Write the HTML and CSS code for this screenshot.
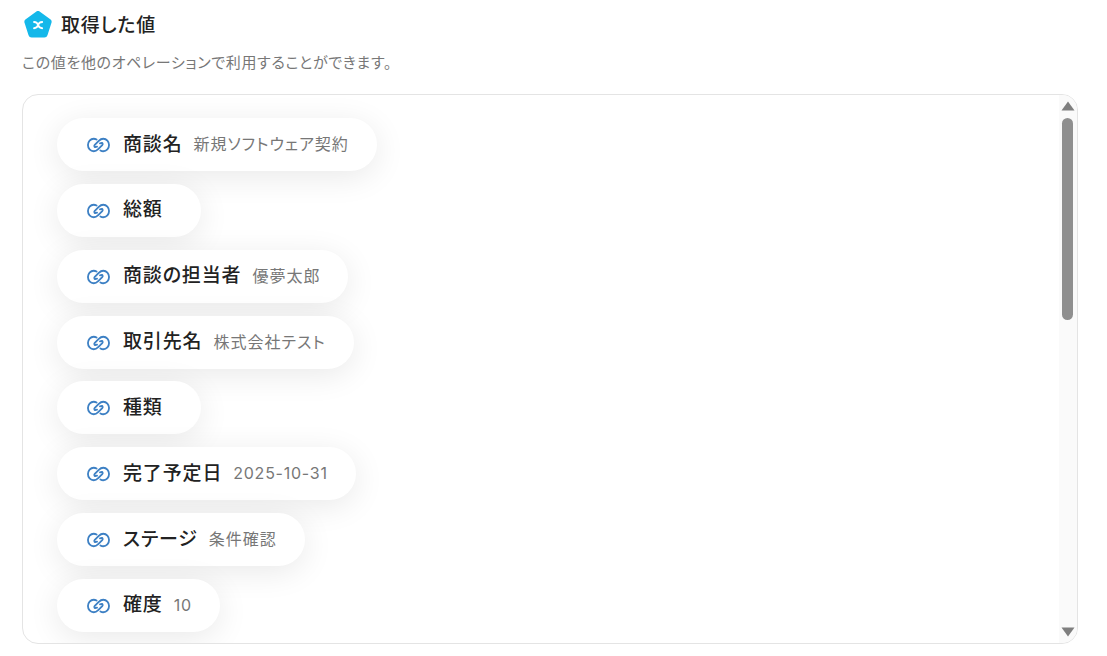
FILE: index.html
```html
<!DOCTYPE html>
<html lang="ja">
<head>
<meta charset="utf-8">
<title>取得した値</title>
<link rel="stylesheet" href="styles.css">
</head>
<body>
<main class="page">
  <header class="head">
    <svg class="logo" viewBox="1 1 26 26" width="28" height="28" aria-hidden="true">
      <path d="M12.2 1.600a3 3 0 0 1 3.600 0l9.600 7a3 3 0 0 1 1.100 3.400l-3.700 11.500a3 3 0 0 1-2.900 2.100H8.100a3 3 0 0 1-2.900-2.100L1.500 12a3 3 0 0 1 1.100-3.400z" fill="#14b8ea"/>
      <path d="M10.300 11.200c2.800 0 3.400 1.500 3.800 2.900s1 2.900 3.800 2.900M10.300 17c2.800 0 3.400-1.500 3.800-2.900s1-2.900 3.800-2.900" stroke="#fff" stroke-width="1.700" stroke-linecap="round" fill="none"/>
    </svg>
    <h1 class="title">取得した値</h1>
  </header>
  <p class="desc">この値を他のオペレーションで利用することができます。</p>
  <section class="card">
    <ul class="list">
      <li class="pill"><svg class="link"><use href="#chain"/></svg><span class="label">商談名</span><span class="value">新規ソフトウェア契約</span></li>
      <li class="pill"><svg class="link"><use href="#chain"/></svg><span class="label">総額</span><span class="value"></span></li>
      <li class="pill"><svg class="link"><use href="#chain"/></svg><span class="label">商談の担当者</span><span class="value">優夢太郎</span></li>
      <li class="pill"><svg class="link"><use href="#chain"/></svg><span class="label">取引先名</span><span class="value">株式会社テスト</span></li>
      <li class="pill"><svg class="link"><use href="#chain"/></svg><span class="label">種類</span><span class="value"></span></li>
      <li class="pill"><svg class="link"><use href="#chain"/></svg><span class="label">完了予定日</span><span class="value value-num">2025-10-31</span></li>
      <li class="pill"><svg class="link"><use href="#chain"/></svg><span class="label">ステージ</span><span class="value">条件確認</span></li>
      <li class="pill"><svg class="link"><use href="#chain"/></svg><span class="label">確度</span><span class="value value-num">10</span></li>
    </ul>
    <div class="scrollbar" aria-hidden="true">
      <svg class="arrow" viewBox="0 0 14 10" width="14" height="10"><path d="M7 .5L13.500 9.500H.5z"/></svg>
      <div class="track"><div class="thumb"></div></div>
      <svg class="arrow" viewBox="0 0 14 10" width="14" height="10"><path d="M.5 .5H13.500L7 9.500z"/></svg>
    </div>
  </section>
</main>
<svg class="defs" aria-hidden="true">
  <symbol id="chain" viewBox="0 0 24 16">
    <g fill="none" stroke="#3d80c4" stroke-width="1.900" stroke-linecap="round" stroke-linejoin="round">
      <path d="M10 2.300C9.100 1.800 8 1.500 7 1.500 3.600 1.500 1 4.400 1 8s2.600 6.500 6 6.500c2 0 3.400-.9 4.700-2.200l4.200-4.200c.8-.8.500-1.800-.3-2.400L13.500 6.200"/>
      <path d="M14 13.700c.9.500 2 .8 3 .8 3.400 0 6-2.900 6-6.500s-2.600-6.500-6-6.500c-2 0-3.400.9-4.700 2.200L8.100 7.900c-.8.800-.5 1.800.3 2.400l2.100 -.5"/>
    </g>
  </symbol>
</svg>
</body>
</html>
```
FILE: styles.css
```css
* { box-sizing: border-box; }
html, body { margin: 0; height: 100%; background: #fff; overflow: hidden; }
body { font-family: "Inter", "Noto Sans CJK JP", sans-serif; color: #222; font-feature-settings: "palt"; }
.page { padding: 11px 29px 0 22px; display: flex; flex-direction: column; height: 656px; }
.head { display: flex; align-items: center; gap: 9px; height: 28px; padding-left: 2px; }
.logo { flex: none; }
.title { margin: 0; padding-top: 2px; font-size: 19px; font-weight: 500; letter-spacing: .76px; line-height: 28px; color: #222; }
.desc { margin: 13px 0 0; font-size: 15px; line-height: 22px; letter-spacing: .65px; color: #777; }
.card { margin-top: 20px; height: 550px; border: 1px solid #e4e4e4; border-radius: 16px; overflow: hidden; display: flex; }
.list { list-style: none; margin: 0; padding: 23px 0 0 34px; flex: 1; min-width: 0; display: flex; flex-direction: column; align-items: flex-start; gap: 12.85px; overflow: hidden; }
.pill { flex: none; height: 53px; display: flex; align-items: center; padding: 0 28px 0 30px; background: #fff; border-radius: 27px; box-shadow: 0 6px 32px rgba(0, 0, 0, .09); }
.link { width: 23px; height: 16px; flex: none; margin: 1px 13px 0 0; }
.label { font-size: 19px; line-height: 26px; font-weight: 500; letter-spacing: .85px; color: #222; white-space: nowrap; }
.value { margin-left: 11px; font-size: 16px; line-height: 24px; padding-bottom: 1px; letter-spacing: 1px; color: #777; white-space: nowrap; }
.value:empty { margin-left: 10px; }
.value-num { letter-spacing: .75px; }
.scrollbar { flex: none; width: 18px; background: #fafafa; display: flex; flex-direction: column; align-items: center; padding: 6px 1px 6px 0; }
.arrow { flex: none; fill: #7f7f7f; }
.track { flex: 1; width: 100%; display: flex; justify-content: center; padding-top: 7px; }
.thumb { width: 11px; height: 202px; background: #8f8f8f; border-radius: 6px; }
.defs { display: none; }
```
